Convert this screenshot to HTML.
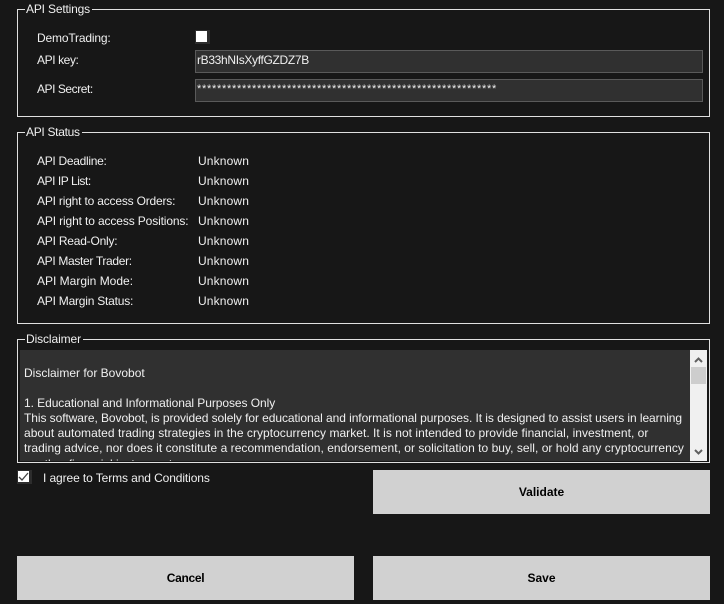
<!DOCTYPE html>
<html><head><meta charset="utf-8">
<style>
html,body{margin:0;padding:0;background:#171717}
body{position:relative;width:724px;height:604px;overflow:hidden;font-family:"Liberation Sans",sans-serif;font-size:12px;color:#f0f0f0}
.a{position:absolute;white-space:nowrap;line-height:16px}
.u{left:198px;letter-spacing:.14px}
.g{position:absolute;border:1px solid #e0e0e0;box-sizing:border-box;left:17px;width:693px}
.leg{position:absolute;left:25px;background:#171717;padding:0 2px 0 1px;white-space:nowrap;line-height:16px}
.inp{position:absolute;left:195px;width:508px;height:23px;box-sizing:border-box;background:#303030;border:1px solid #5a5a5a}
.btn{position:absolute;width:337px;height:44px;background:#d1d1d1;color:#000;font-weight:bold;text-align:center;line-height:44px}
</style></head><body>

<div class="g" style="top:9px;height:108px"></div>
<div class="leg" style="top:1px;letter-spacing:-.17px">API Settings</div>
<div class="a" style="left:37px;top:30px;letter-spacing:-.17px">DemoTrading:</div>
<div style="position:absolute;left:195px;top:30px;width:15px;height:14px;background:#2d2d2d"></div>
<div style="position:absolute;left:196px;top:31px;width:11px;height:11px;background:#fff"></div>
<div class="a" style="left:37px;top:52px;letter-spacing:-.4px">API key:</div>
<div class="inp" style="top:50px"></div>
<div class="a" style="left:197px;top:52px;letter-spacing:-.33px">rB33hNIsXyffGZDZ7B</div>
<div class="a" style="left:37px;top:81px;letter-spacing:-.45px">API Secret:</div>
<div class="inp" style="top:79px"></div>
<div class="a" style="left:197px;top:81px;font-size:11px;letter-spacing:0.72px">************************************************************</div>

<div class="g" style="top:132px;height:192px"></div>
<div class="leg" style="top:124px;letter-spacing:-.3px">API Status</div>
<div class="a" style="left:37px;top:153px;letter-spacing:-.3px">API Deadline:</div><div class="a u" style="top:153px">Unknown</div>
<div class="a" style="left:37px;top:173px;letter-spacing:-.45px">API IP List:</div><div class="a u" style="top:173px">Unknown</div>
<div class="a" style="left:37px;top:193px;letter-spacing:-.19px">API right to access Orders:</div><div class="a u" style="top:193px">Unknown</div>
<div class="a" style="left:37px;top:213px;letter-spacing:-.13px">API right to access Positions:</div><div class="a u" style="top:213px">Unknown</div>
<div class="a" style="left:37px;top:233px;letter-spacing:-.21px">API Read-Only:</div><div class="a u" style="top:233px">Unknown</div>
<div class="a" style="left:37px;top:253px;letter-spacing:-.33px">API Master Trader:</div><div class="a u" style="top:253px">Unknown</div>
<div class="a" style="left:37px;top:273px">API Margin Mode:</div><div class="a u" style="top:273px">Unknown</div>
<div class="a" style="left:37px;top:293px;letter-spacing:-.22px">API Margin Status:</div><div class="a u" style="top:293px">Unknown</div>

<div class="g" style="top:339px;height:124px"></div>
<div class="leg" style="top:331px;letter-spacing:-.1px">Disclaimer</div>
<div style="position:absolute;left:20px;top:350px;width:670px;height:111px;background:#303030;overflow:hidden">
<div class="a" style="left:4px;top:15px">Disclaimer for Bovobot</div>
<div class="a" style="left:4px;top:45px;letter-spacing:-.065px">1. Educational and Informational Purposes Only</div>
<div class="a" style="left:4px;top:60px;letter-spacing:-.07px">This software, Bovobot, is provided solely for educational and informational purposes. It is designed to assist users in learning</div>
<div class="a" style="left:4px;top:75px;letter-spacing:.034px">about automated trading strategies in the cryptocurrency market. It is not intended to provide financial, investment, or</div>
<div class="a" style="left:4px;top:90px;letter-spacing:.03px">trading advice, nor does it constitute a recommendation, endorsement, or solicitation to buy, sell, or hold any cryptocurrency</div>
<div class="a" style="left:4px;top:106px">or other financial instrument.</div>
</div>
<div style="position:absolute;left:690px;top:350px;width:17px;height:111px;background:#f0f0f0"></div>
<div style="position:absolute;left:691px;top:367px;width:15px;height:17px;background:#cdcdcd"></div>
<svg style="position:absolute;left:690px;top:350px" width="17" height="111"><path d="M5 12 L8.500 8.500 L12 12" fill="none" stroke="#606060" stroke-width="2"/><path d="M5 100 L8.500 103.500 L12 100" fill="none" stroke="#606060" stroke-width="2"/></svg>

<div style="position:absolute;left:17px;top:470px;width:15px;height:14px;background:#2d2d2d"></div>
<div style="position:absolute;left:18px;top:471px;width:11px;height:11px;background:#fff"></div>
<svg style="position:absolute;left:18px;top:471px" width="11" height="11"><path d="M1 6 L4 9 L10 2" fill="none" stroke="#444" stroke-width="1.300"/></svg>
<div class="a" style="left:43px;top:470px;letter-spacing:-.1px">I agree to Terms and Conditions</div>

<div class="btn" style="left:373px;top:470px">Validate</div>
<div class="btn" style="left:17px;top:556px;letter-spacing:-.3px">Cancel</div>
<div class="btn" style="left:373px;top:556px">Save</div>
</body></html>
